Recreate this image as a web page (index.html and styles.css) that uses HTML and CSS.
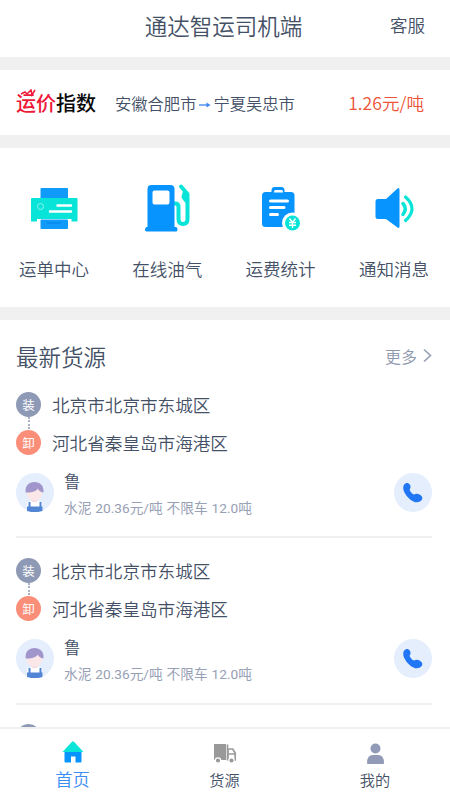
FILE: index.html
```html
<!DOCTYPE html>
<html lang="zh-CN">
<head>
<meta charset="utf-8">
<meta name="viewport" content="width=device-width, initial-scale=1">
<title>通达智运司机端</title>
<link rel="stylesheet" href="styles.css">
</head>
<body>
<svg class="defs" width="0" height="0" aria-hidden="true">
  <symbol id="avatar" viewBox="0 0 38 39">
    <ellipse cx="19" cy="19.5" rx="19" ry="19.5" fill="#e5eefc"/>
    <path d="M11 29.500l4-1.500h7.500l4 1.500v7.500q-7.500 3-15.500 0z" fill="#fff"/>
    <path d="M15.500 24h6v4.500q-3 1.500-6 0z" fill="#f7dbe0"/>
    <ellipse cx="18.500" cy="20" rx="7.800" ry="7.500" fill="#fbe6e8"/>
    <path d="M9.700 19.500C8.800 12.500 13 9 18.500 9s9.800 3.500 9 10.500c-3.500-.5-4.800-2-5.500-4-2 3-7 4.300-12.300 4z" fill="#a096cc"/>
    <path d="M12.500 29h2v4.500h9V29h2v4.500h1V38q-8 2.500-15.500 0v-4.500h1.500z" fill="#5385d5"/>
  </symbol>
  <symbol id="phone" viewBox="0 0 38 39">
    <ellipse cx="19" cy="19.500" rx="19" ry="19.500" fill="#e5eefc"/>
    <path d="M10.200 11.500C11.500 9.500 14.500 9.300 15.800 11.500c1.200 2 .9 3.500-.1 5-.5 1 3 5.200 4.300 5 1.800-.9 4-1 5.500.1 1.500 1 3.500 2.400 2.700 4.400-1 2.600-4 3.600-7 3.200C15.500 28 8.200 19 9.300 13.800q.2-1.300.9-2.300z" fill="#2176f5"/>
  </symbol>
</svg>

<div class="app">
  <header class="header">
    <span></span>
    <h1 class="title">通达智运司机端</h1>
    <span class="service">客服</span>
  </header>

  <section class="index">
    <div class="logo"><span class="red">运价</span>指数
      <svg class="spark" width="20" height="8" viewBox="0 0 20 8"><path d="M4 5l4-2 2 2L14 1l1 5 3-5" fill="none" stroke="#ee1838" stroke-width="1.500"/></svg>
    </div>
    <div class="route">安徽合肥市<svg class="arrow" width="17" height="10" viewBox="0 0 17 10"><path d="M3 7h9" stroke="#3c86ef" stroke-width="1.300"/><path d="M10.500 4.500L14.500 7l-4 2.500z" fill="#3c86ef"/></svg>宁夏吴忠市</div>
    <div class="price">1.26元/吨</div>
  </section>

  <nav class="menu">
    <div class="entry">
      <svg width="48" height="50" viewBox="0 0 48 50">
        <rect x="10.500" y="5" width="27.500" height="15" rx="1" fill="#109bfb"/>
        <path d="M1 16q0-1 1-1h44.500q1 0 1 1v22.500h-6V36H7v2.500H1z" fill="#08e4d7"/>
        <rect x="10.500" y="36.500" width="27.500" height="9.500" rx="1" fill="#109bfb"/>
        <circle cx="10.500" cy="23.500" r="3" fill="none" stroke="#8cf5ef"/>
        <path d="M27.500 22.500H41M20 28.500h21" stroke="#fff" stroke-width="2.500" stroke-linecap="round"/>
        <path d="M17 40h14" stroke="#0789ee" stroke-width="1.500"/>
      </svg>
      <span>运单中心</span>
    </div>
    <div class="entry">
      <svg width="48" height="50" viewBox="0 0 48 50">
        <path d="M31 20.500h1.500q3 0 3 3.500v12q0 5 4.500 5t4.500-5V11l-6.500-7.500M41.500 10l-1 4 3 4" fill="none" stroke="#08e4d7" stroke-width="4" stroke-linecap="round" stroke-linejoin="round"/>
        <path fill-rule="evenodd" d="M4.500 44V6q0-4 4-4h19q4 0 4 4v38h1.500q1.500 0 1.500 2.500T33 48.500H3.500Q2 48.500 2 46.500T3.500 44zM11.500 7.500q-2 0-2 2v10q0 2 2 2h13q2 0 2-2v-10q0-2-2-2z" fill="#0794ff"/>
      </svg>
      <span>在线油气</span>
    </div>
    <div class="entry">
      <svg width="48" height="50" viewBox="0 0 48 50">
        <rect x="5" y="9" width="32.500" height="35" rx="3.500" fill="#0794ff"/>
        <path d="M14.500 10V7.500q0-3.500 3-3.500h7q3 0 3 3.500V10z" fill="#0794ff"/>
        <path d="M17 8.500q0-1.500 1.500-1.500h6q1.500 0 1.500 1.500V9.500H17z" fill="#fff"/>
        <path d="M13.500 18h17M13.500 24.500h13.500M13.500 31.500h7" stroke="#fff" stroke-width="3" stroke-linecap="round"/>
        <circle cx="35.500" cy="40" r="10.500" fill="#fff"/>
        <circle cx="35.500" cy="40" r="7.500" fill="#08e4d7"/>
        <path d="M32.500 35.500l3 4 3-4M35.500 39.500V45M32 39.500h7M32 42.300h7" fill="none" stroke="#fff" stroke-width="1.400"/>
      </svg>
      <span>运费统计</span>
    </div>
    <div class="entry">
      <svg width="48" height="50" viewBox="0 0 48 50">
        <path d="M8 16h8L27.500 5.500Q29.500 4 29.500 7v36q0 3-2 1.500L16 36H8q-2.500 0-2.500-2.500v-15Q5.500 16 8 16z" fill="#0794ff"/>
        <path d="M33 20.500q4.500 5 0 11" fill="none" stroke="#08e4d7" stroke-width="3.500" stroke-linecap="round"/>
        <path d="M35.500 14q13 11.500 0 23.500" fill="none" stroke="#08e4d7" stroke-width="3.200" stroke-linecap="round"/>
      </svg>
      <span>通知消息</span>
    </div>
  </nav>

  <main class="cargo">
    <div class="cargo-head">
      <h2>最新货源</h2>
      <span class="more">更多<svg width="10" height="16" viewBox="0 0 10 16"><path d="M2 1.500L8.500 7.500l-6.500 6" fill="none" stroke="#97a0b5" stroke-width="1.700"/></svg></span>
    </div>
    <article class="item">
      <div class="stop"><i class="badge load">装</i><span>北京市北京市东城区</span></div>
      <div class="link"></div>
      <div class="stop"><i class="badge unload">卸</i><span>河北省秦皇岛市海港区</span></div>
      <div class="owner">
        <svg width="38" height="39"><use href="#avatar"/></svg>
        <div class="info"><div class="name">鲁</div><div class="detail">水泥 20.36元/吨 不限车 12.0吨</div></div>
        <svg width="38" height="39"><use href="#phone"/></svg>
      </div>
    </article>
    <article class="item">
      <div class="stop"><i class="badge load">装</i><span>北京市北京市东城区</span></div>
      <div class="link"></div>
      <div class="stop"><i class="badge unload">卸</i><span>河北省秦皇岛市海港区</span></div>
      <div class="owner">
        <svg width="38" height="39"><use href="#avatar"/></svg>
        <div class="info"><div class="name">鲁</div><div class="detail">水泥 20.36元/吨 不限车 12.0吨</div></div>
        <svg width="38" height="39"><use href="#phone"/></svg>
      </div>
    </article>
    <article class="item"><div class="stop"><i class="badge load"></i></div></article>
  </main>

  <footer class="tabs">
    <div class="tab active">
      <svg width="24" height="24" viewBox="0 0 24 24"><path d="M3.500 11h17v10.500q0 1-1 1h-5V16.500H10v6H4.500q-1 0-1-1z" fill="#0794ff"/><path d="M1.500 12L11 1.800q1-1 2 0l9.500 10.200z" fill="#08e4d7"/></svg>
      <span>首页</span>
    </div>
    <div class="tab">
      <svg width="24" height="24" viewBox="0 0 24 24"><path d="M1 4h12v16H1z" fill="#999"/><path d="M14.500 4.500V20M15 9h4.700l2.500 4V20H15zM16 14h6" fill="none" stroke="#999" stroke-width="1.700"/><circle cx="5" cy="20.500" r="2.700" fill="#999" stroke="#fff" stroke-width="1.200"/><circle cx="18.500" cy="20.500" r="2.700" fill="#999" stroke="#fff" stroke-width="1.200"/></svg>
      <span>货源</span>
    </div>
    <div class="tab">
      <svg width="24" height="24" viewBox="0 0 24 24"><circle cx="12.500" cy="8.500" r="5" fill="#919bb8"/><path d="M4 23q0-8 6-8h5q6 0 6 8 0 1-1 1H5q-1 0-1-1z" fill="#919bb8"/></svg>
      <span>我的</span>
    </div>
  </footer>
</div>
</body>
</html>
```

FILE: styles.css
```css
* { box-sizing: border-box; }
body {
  margin: 0;
  font-family: "Noto Sans CJK SC", sans-serif;
  font-weight: 350;
  color: #445066;
  background: #f0f0f0;
}
h1, h2 { margin: 0; font-weight: inherit; }
svg { display: block; flex: none; }
.defs { position: absolute; }
.app {
  height: 800px;
  display: flex;
  flex-direction: column;
  overflow: hidden;
}
.header {
  flex: none;
  height: 57px;
  margin-bottom: 13px;
  padding: 0 25px 7px 22px;
  background: #fff;
  display: grid;
  grid-template-columns: 1fr auto 1fr;
  align-items: center;
}
.title { font-size: 22.500px; line-height: 30px; }
.service { justify-self: end; font-size: 17.500px; line-height: 26px; }
.index {
  flex: none;
  height: 65px;
  margin-bottom: 13px;
  padding: 0 26px 0 16px;
  background: #fff;
  display: flex;
  align-items: center;
  white-space: nowrap;
}
.logo {
  position: relative;
  width: 99px;
  font-size: 20px;
  font-weight: 500;
  line-height: 28px;
  color: #080808;
}
.red { color: #ee1838; }
.spark { position: absolute; left: 1px; top: 0; }
.route { display: flex; align-items: center; font-size: 16.300px; line-height: 26px; }
.price { margin-left: auto; font-size: 17.600px; line-height: 26px; color: #ec5439; }
.menu {
  flex: none;
  height: 159px;
  margin-bottom: 13px;
  padding: 35px 0 0;
  background: #fff;
  display: grid;
  grid-template-columns: repeat(4, 113.300px);
  overflow: hidden;
}
.entry {
  display: flex;
  flex-direction: column;
  align-items: center;
  gap: 23px;
  width: 108px;
  font-size: 17.500px;
  line-height: 26px;
}
.cargo {
  flex: 1;
  min-height: 0;
  overflow: hidden;
  background: #fff;
  padding: 0 18px 0 16px;
}
.cargo-head {
  height: 71px;
  padding-top: 1px;
  display: flex;
  align-items: center;
  justify-content: space-between;
}
.cargo-head h2 { font-size: 22.500px; line-height: 30px; }
.more { display: flex; align-items: center; gap: 5px; font-size: 16px; color: #8f99af; }
.item { height: 166.300px; }
.item:not(:last-child) { border-bottom: 2px solid #f0f0f1; height: 147.300px; margin-bottom: 19px; }
.stop { display: flex; align-items: center; gap: 11px; height: 26px; font-size: 17.600px; }
.badge {
  width: 25px;
  height: 25px;
  border-radius: 50%;
  font-size: 12.500px;
  font-weight: 400;
  line-height: 25px;
  font-style: normal;
  text-align: center;
  color: #fff;
}
.load { background: #8e9ab5; }
.unload { background: #fa8e79; }
.link { height: 12px; width: 14px; border-right: 2px dotted #a9b1c3; }
.owner { display: flex; align-items: center; height: 39px; margin-top: 18px; }
.info { flex: 1; height: 51px; margin-left: 10px; margin-top: 4px; }
.name { font-size: 16.500px; line-height: 24px; }
.detail { font-family: Roboto, "Noto Sans CJK SC", sans-serif; font-weight: 400; font-size: 13.700px; line-height: 20px; margin-top: 5px; word-spacing: .5px; color: #97a0b5; }
.tabs {
  flex: none;
  height: 73px;
  border-top: 2px solid #f0f0f0;
  background: #fff;
  padding: 11px 0 0;
  display: grid;
  grid-template-columns: 145px 159px 142px;
}
.tab { display: flex; flex-direction: column; align-items: center; gap: 3px; font-size: 15.200px; line-height: 24px; }
.active { font-size: 17.300px; color: #3c8df2; }
```
